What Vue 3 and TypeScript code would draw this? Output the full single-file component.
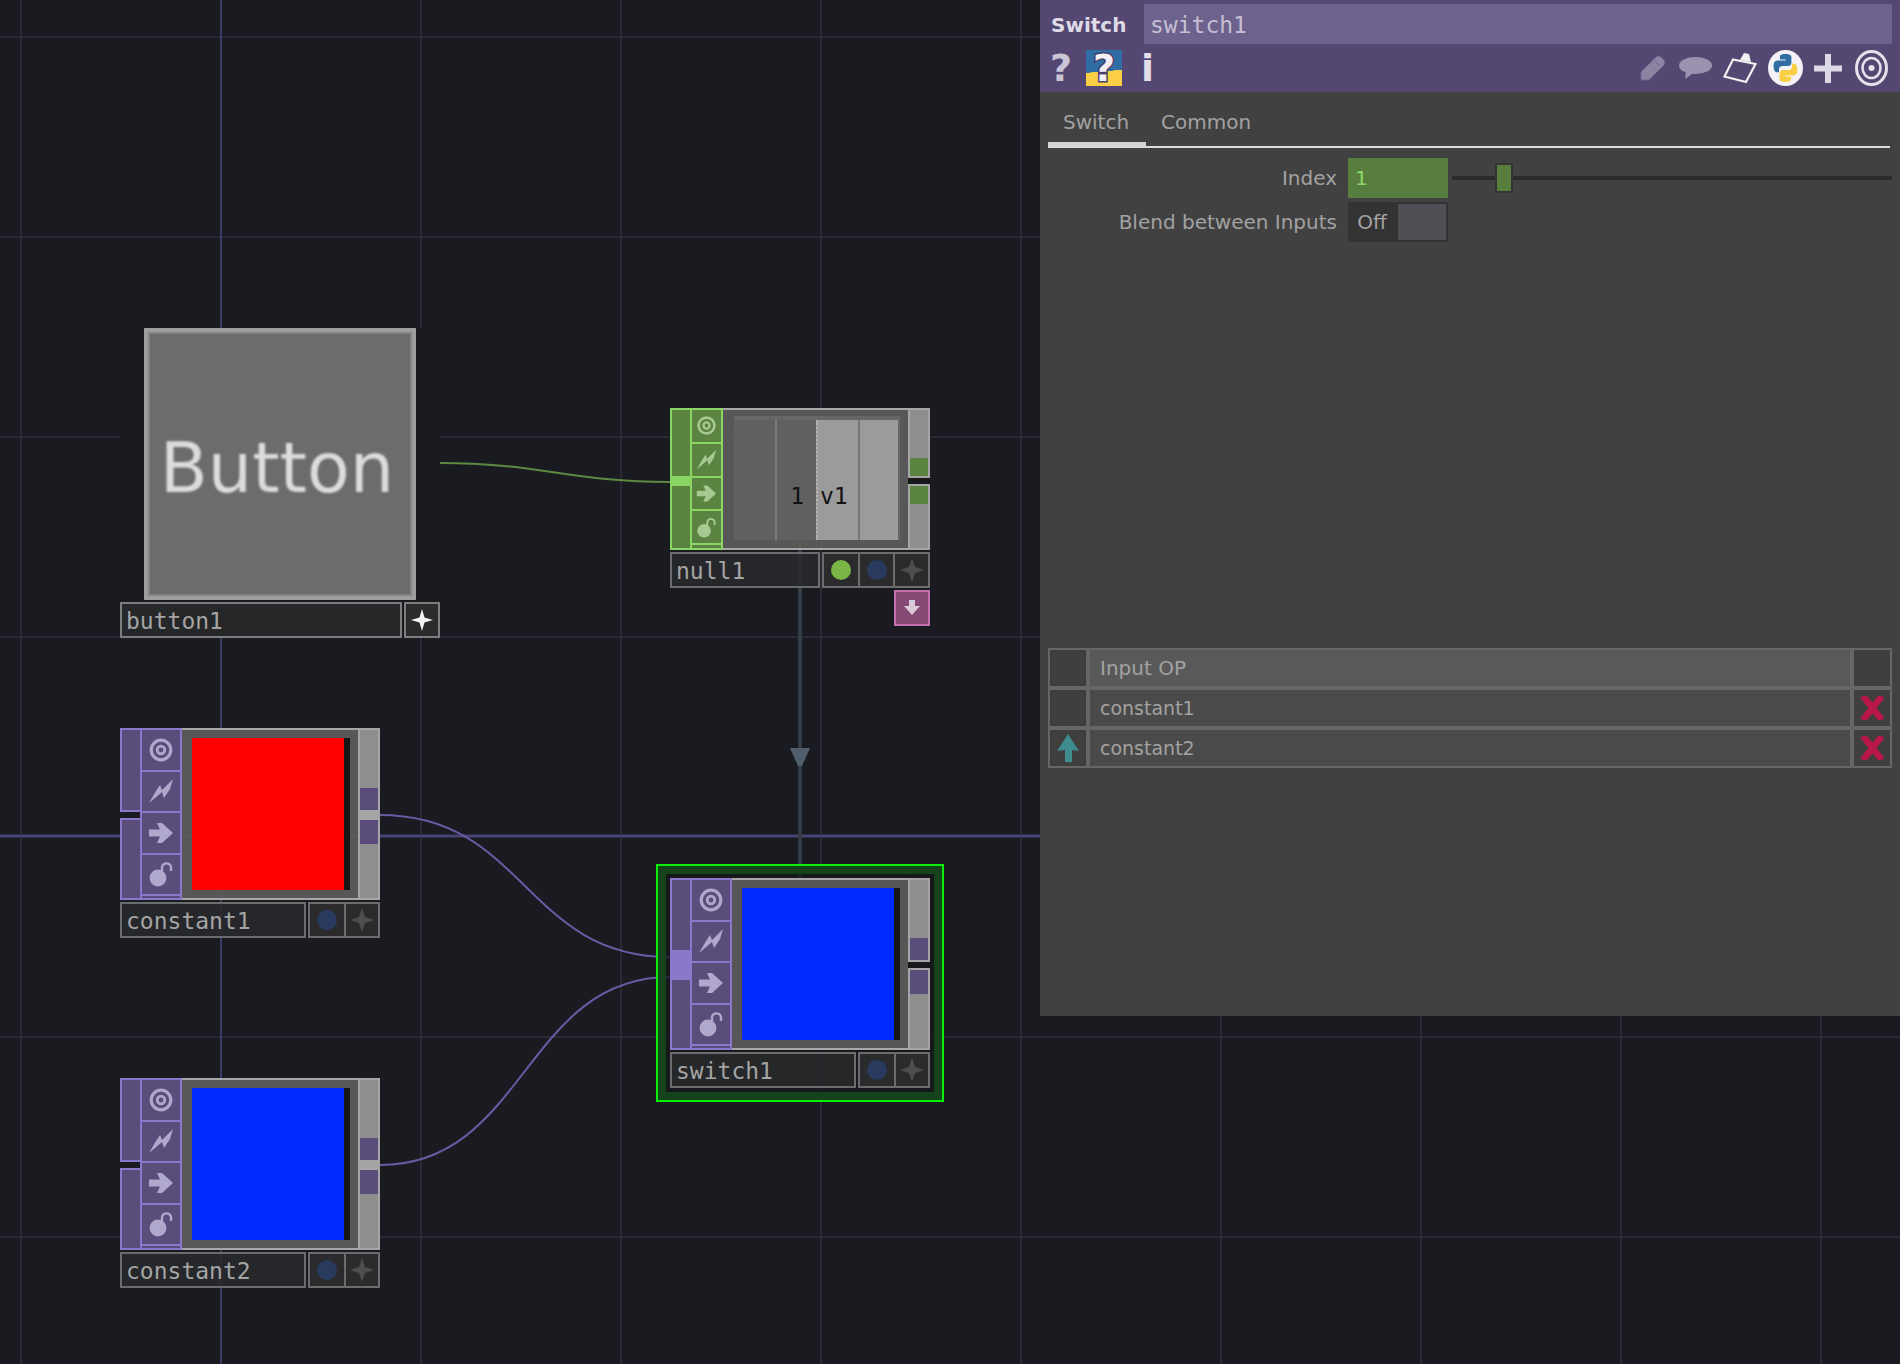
<script setup lang="ts">
interface OpNode {
  id: string
  tone: 'green' | 'purple'
  kind: 'const' | 'null' | 'switch'
  left: number
  top: number
  thumb: 'red' | 'blue' | 'chop'
  buttons: string[]
}

const nodes: OpNode[] = [
  { id: 'null1', tone: 'green', kind: 'null', left: 670, top: 408, thumb: 'chop', buttons: ['green', 'blue', 'star'] },
  { id: 'constant1', tone: 'purple', kind: 'const', left: 120, top: 728, thumb: 'red', buttons: ['blue', 'star'] },
  { id: 'constant2', tone: 'purple', kind: 'const', left: 120, top: 1078, thumb: 'blue', buttons: ['blue', 'star'] },
  { id: 'switch1', tone: 'purple', kind: 'switch', left: 670, top: 878, thumb: 'blue', buttons: ['blue', 'star'] },
]

const flagIcons = ['target', 'bolt', 'arrow', 'lock']
const vLines = [21, 421, 621, 821, 1021, 1221, 1421, 1621, 1821]
const hLines = [36, 236, 436, 636, 1036, 1236]
const tableRows = [
  { name: 'constant1', up: false },
  { name: 'constant2', up: true },
]
</script>

<template>
  <div class="canvas">
    <svg class="backdrop" width="1900" height="1364" viewBox="0 0 1900 1364">
      <line v-for="x in vLines" :key="'v' + x" :x1="x" y1="0" :x2="x" y2="1364" class="grid" />
      <line v-for="y in hLines" :key="'h' + y" x1="0" :y1="y + 1" x2="1900" :y2="y + 1" class="grid" />
      <line x1="221" y1="0" x2="221" y2="1364" class="axis" />
      <line x1="0" y1="836" x2="1900" y2="836" class="axis-edge" />
      <line x1="0" y1="836" x2="1900" y2="836" class="axis-core" />
      <line x1="800" y1="540" x2="800" y2="890" class="wire-v" />
      <polygon points="790,748 810,748 802,766 798,766" class="wire-arrow" />
      <path d="M440 463 C 540 463, 570 482, 670 482" class="wire-green" />
      <path d="M380 815 C 525 815, 525 957, 670 957" class="wire-purple" />
      <path d="M380 1165 C 525 1165, 525 977, 670 977" class="wire-purple" />
    </svg>

    <div class="selection"></div>

    <div class="button-node">
      <div class="button-face"><span class="button-text">Button</span></div>
      <div class="footer">
        <div class="label label-bright">button1</div>
        <div class="btns btns-bright">
          <div class="cell">
            <svg class="cell-icon" viewBox="0 0 24 24"><path d="M12 1 L14.5 9.5 L23 12 L14.5 14.5 L12 23 L9.5 14.5 L1 12 L9.5 9.5Z" fill="#f2f2f2" /></svg>
          </div>
        </div>
      </div>
    </div>

    <div
      v-for="n in nodes"
      :key="n.id"
      class="node"
      :class="['tone-' + n.tone, 'kind-' + n.kind]"
      :style="{ left: n.left + 'px', top: n.top + 'px' }"
    >
      <div class="body">
        <div class="inputs">
          <template v-if="n.kind === 'const'">
            <div class="strip strip-a"></div>
            <div class="strip strip-b"></div>
          </template>
          <div v-else class="strip strip-one">
            <div class="strip-fill"></div>
            <div class="strip-hl"></div>
          </div>
        </div>

        <div class="flags">
          <div v-for="f in flagIcons" :key="f" class="flag">
            <svg class="flag-icon" viewBox="0 0 26 26">
              <g v-if="f === 'target'" fill="none" class="ic-stroke">
                <circle cx="13" cy="13" r="9.8" stroke-width="3.2" />
                <circle cx="13" cy="13" r="3.8" stroke-width="2.8" />
              </g>
              <path v-else-if="f === 'bolt'" class="ic-fill" d="M1 25 L8 13 L12 7 L14 12 L20 6 L25 1 L22 11 L16 20 L14 14 L7 20Z" />
              <path v-else-if="f === 'arrow'" class="ic-fill" d="M1 9.5 H12 L9 3 H14 L25 13 L14 23 H9 L12 16.5 H1Z" />
              <g v-else>
                <circle cx="10" cy="17" r="8.4" class="ic-fill" />
                <path d="M14 10 V6 A4.6 4.6 0 0 1 23 6 V10" fill="none" class="ic-stroke" stroke-width="2.4" />
              </g>
            </svg>
          </div>
          <div class="flag-sliver"></div>
        </div>

        <div class="viewer">
          <div v-if="n.thumb === 'chop'" class="chop">
            <div class="chop-dark"><span>1</span></div>
            <div class="chop-bright"><span>v1</span></div>
          </div>
          <template v-else>
            <div class="thumb" :class="'thumb-' + n.thumb"></div>
            <div class="thumb-edge"></div>
          </template>
        </div>

        <div class="outs">
          <div class="seg seg-top"></div>
          <div class="conn conn-a"></div>
          <div class="sep"><div class="sep-gap"></div></div>
          <div class="conn conn-b"></div>
          <div class="seg seg-bot"></div>
        </div>
      </div>

      <div class="footer">
        <div class="label">{{ n.id }}</div>
        <div class="btns">
          <div v-for="b in n.buttons" :key="b" class="cell">
            <span v-if="b === 'green'" class="dot dot-green"></span>
            <span v-else-if="b === 'blue'" class="dot dot-blue"></span>
            <svg v-else class="cell-icon" viewBox="0 0 24 24"><path d="M12 0 L15 9 L24 12 L15 15 L12 24 L9 15 L0 12 L9 9Z" fill="#4d4e50" /></svg>
          </div>
        </div>
      </div>

      <div v-if="n.kind === 'null'" class="pink">
        <svg width="20" height="20" viewBox="0 0 20 20"><path d="M7 2 H13 V8 H18 L10 17 L2 8 H7Z" fill="#dccbd8" /></svg>
      </div>
    </div>

    <aside class="panel">
      <header class="head">
        <div class="head-top">
          <div class="op-type">Switch</div>
          <div class="op-name">switch1</div>
        </div>
        <div class="head-bar">
          <span class="glyph glyph-q">?</span>
          <span class="help-box"><span>?</span></span>
          <span class="glyph glyph-i">i</span>
          <div class="head-tools">
            <svg class="tool-pencil" width="26" height="26" viewBox="0 0 26 26"><path d="M1 17 L16 2 Q18 0 21 2 L24 5 Q26 8 24 10 L9 25 H1Z M15 6 L20 11" fill="#8d84a3" stroke="#6d628e" stroke-width="1" /></svg>
            <svg class="tool-chat" width="33" height="22" viewBox="0 0 33 22"><ellipse cx="16.5" cy="8.5" rx="16.5" ry="8.5" fill="#9a92ae" /><path d="M7 13 L6 22 L16 15Z" fill="#9a92ae" /></svg>
            <svg class="tool-clip" width="34" height="31" viewBox="0 0 34 31"><path d="M10 6.5 L32.5 11 L23 29 L1.5 23.5Z" fill="none" stroke="#f2f2f2" stroke-width="2.2" /><path d="M17 7 L21 0 L26 1 L28 9Z" fill="#f2f2f2" /></svg>
            <svg class="tool-py" width="35" height="36" viewBox="0 0 35 36">
              <ellipse cx="17.5" cy="18" rx="17.5" ry="18" fill="#f4f2f6" />
              <path d="M17.5 4 C11.5 4 11.9 6.7 11.9 6.7 V9.6 H17.7 V10.5 H9.6 S5.6 10 5.6 16.2 C5.6 22.4 9 22.2 9 22.2 H11 V19.3 S10.9 15.9 14.4 15.9 H20.2 S23.4 16 23.4 12.8 V7.3 S23.9 4 17.5 4Z" fill="#2f6ea5" />
              <path d="M17.5 32 C23.5 32 23.1 29.3 23.1 29.3 V26.4 H17.3 V25.5 H25.4 S29.4 26 29.4 19.8 C29.4 13.6 26 13.8 26 13.8 H24 V16.7 S24.1 20.1 20.6 20.1 H14.8 S11.6 20 11.6 23.2 V28.7 S11.1 32 17.5 32Z" fill="#fbcf45" />
            </svg>
            <svg class="tool-plus" width="28" height="29" viewBox="0 0 28 29"><path d="M11 0 H17 V11.5 H28 V17.5 H17 V29 H11 V17.5 H0 V11.5 H11Z" fill="#dcd9e4" /></svg>
            <svg class="tool-target" width="33" height="36" viewBox="0 0 33 36">
              <ellipse cx="16.5" cy="18" rx="15" ry="16.5" fill="none" stroke="#e4e1ea" stroke-width="3" />
              <ellipse cx="16.5" cy="18" rx="9" ry="10" fill="none" stroke="#e4e1ea" stroke-width="2.6" />
              <circle cx="16.5" cy="18" r="3" fill="#e4e1ea" />
            </svg>
          </div>
        </div>
      </header>

      <nav class="tabs">
        <div class="tab tab-on">Switch</div>
        <div class="tab">Common</div>
      </nav>

      <section class="params">
        <div class="param">
          <div class="param-label">Index</div>
          <div class="param-field">1</div>
          <div class="slider"><span class="slider-knob"></span></div>
        </div>
        <div class="param">
          <div class="param-label">Blend between Inputs</div>
          <div class="toggle"><span class="toggle-text">Off</span><span class="toggle-box"></span></div>
        </div>
      </section>

      <section class="table">
        <div class="row row-head">
          <div class="side"></div>
          <div class="main">Input OP</div>
          <div class="side"></div>
        </div>
        <div v-for="r in tableRows" :key="r.name" class="row">
          <div class="side">
            <svg v-if="r.up" width="24" height="28" viewBox="0 0 24 28"><path d="M12 0 L23 17 L16 16 V28 H9 V16 L1 17Z" fill="#3f8c8c" /></svg>
          </div>
          <div class="main">{{ r.name }}</div>
          <div class="side">
            <svg width="25" height="24" viewBox="0 0 25 24"><path d="M3 0 L22 24 M22 0 L3 24" fill="none" stroke="#b8174a" stroke-width="6.5" /></svg>
          </div>
        </div>
      </section>
    </aside>
  </div>
</template>

<style scoped>
.canvas {
  position: relative;
  width: 1900px;
  height: 1364px;
  overflow: hidden;
  background: #1a1b20;
  font-family: "DejaVu Sans", sans-serif;
}
.backdrop { position: absolute; left: 0; top: 0; }
.grid { stroke: #292a33; stroke-width: 2; }
.axis { stroke: #3b3b66; stroke-width: 2; }
.axis-edge { stroke: #2d2d44; stroke-width: 4; }
.axis-core { stroke: #46467a; stroke-width: 2; }
.wire-v { stroke: #343d47; stroke-width: 4; }
.wire-arrow { fill: #4f5e6d; }
.wire-green { fill: none; stroke: #5c8a42; stroke-width: 2; }
.wire-purple { fill: none; stroke: #6a5aa4; stroke-width: 2; }

.selection {
  position: absolute;
  left: 656px;
  top: 864px;
  width: 288px;
  height: 238px;
  box-sizing: border-box;
  border: 2px solid #08f008;
  outline: 8px solid rgba(20, 73, 27, 0.86);
  outline-offset: -10px;
  background: rgba(22, 23, 27, 0.78);
}

.button-node {
  position: absolute;
  left: 120px;
  top: 328px;
  width: 320px;
  background: #18191d;
}
.button-face {
  box-sizing: border-box;
  width: 272px;
  height: 272px;
  margin: 0 24px;
  border: 4px solid #9d9d9d;
  box-shadow: inset 0 0 0 2px #858585;
  background: #6c6c6c;
  display: flex;
  align-items: center;
  justify-content: center;
}
.button-text {
  font-size: 70px;
  line-height: 1;
  color: #dcdcdc;
  filter: blur(1.2px);
  transform: translate(-3px, 4px);
}

.node { position: absolute; width: 260px; }
.tone-purple { --f: #8a78cc; --i: #5a4d7c; --ic: #b0a8cc; }
.tone-green { --f: #8ad664; --i: #5b8443; --ic: #a5c990; }

.body { display: flex; height: 172px; }
.kind-null .body { height: 142px; }

.inputs { width: 20px; display: flex; flex-direction: column; justify-content: space-between; }
.strip {
  box-sizing: border-box;
  border: 2px solid var(--f);
  border-right: 0;
  background: var(--i);
}
.strip-a { height: 84px; }
.strip-b { height: 82px; }
.strip-one { height: 100%; display: flex; flex-direction: column; }
.strip-fill { height: 70px; }
.strip-hl { height: 30px; background: var(--f); }
.kind-null .strip-fill { height: 66px; }
.kind-null .strip-hl { height: 10px; }

.flags {
  box-sizing: border-box;
  width: 42px;
  display: flex;
  flex-direction: column;
  border: 2px solid var(--f);
  background: var(--i);
}
.kind-null .flags { width: 33px; }
.flag {
  flex: 1;
  display: flex;
  align-items: center;
  justify-content: center;
  border-bottom: 2px solid var(--f);
}
.flag-sliver { height: 2px; }
.kind-null .flag-sliver { height: 3px; }
.flag-icon { width: 26px; height: 26px; filter: blur(0.4px); }
.kind-null .flag-icon { width: 21px; height: 21px; }
.ic-fill { fill: var(--ic); }
.ic-stroke { stroke: var(--ic); }

.viewer {
  flex: 1;
  box-sizing: border-box;
  display: flex;
  padding: 8px 8px 8px 10px;
  border-top: 2px solid #a8a8a8;
  border-bottom: 2px solid #a8a8a8;
  background: rgba(92, 92, 92, 0.92);
}
.thumb { width: 152px; height: 152px; }
.thumb-red { background: #ff0000; }
.thumb-blue { background: #002aff; }
.thumb-edge { width: 6px; height: 152px; background: #161616; }

.kind-null .viewer { padding: 6px 8px 8px 11px; }
.chop { flex: 1; display: flex; background: #676767; padding-top: 4px; padding-right: 2px; }
.chop-dark, .chop-bright {
  position: relative;
  display: flex;
  align-items: flex-end;
  padding-bottom: 30px;
  font-family: "DejaVu Sans Mono", monospace;
  font-size: 23px;
  line-height: 27px;
  color: #111;
}
.chop-dark {
  flex: 1;
  justify-content: flex-end;
  padding-right: 12px;
  background: #606060;
}
.chop-dark::after {
  content: "";
  position: absolute;
  left: 41px;
  top: 0;
  bottom: 0;
  width: 2px;
  background: #7b7b7b;
}
.chop-bright {
  box-sizing: border-box;
  width: 82px;
  padding-left: 2px;
  background: #9b9b9b;
  border-left: 2px dotted #b5b5b5;
}
.chop-bright::after {
  content: "";
  position: absolute;
  left: 40px;
  top: 0;
  bottom: 0;
  width: 2px;
  background: #777;
}

.outs {
  box-sizing: border-box;
  width: 22px;
  display: flex;
  flex-direction: column;
  border: 2px solid #a5a5a5;
  background: #8e8e8e;
}
.seg-top { height: 58px; }
.kind-null .seg-top { height: 48px; }
.seg-bot { flex: 1; }
.conn { background: var(--i); }
.conn-a { height: 22px; }
.conn-b { height: 24px; }
.kind-null .conn-a, .kind-null .conn-b { height: 18px; }
.sep { height: 10px; background: #a5a5a5; box-sizing: border-box; padding: 2px 0; margin: 0 -2px; }
.kind-const .sep-gap { display: none; }
.sep-gap { height: 6px; background: #17181c; }

.footer { display: flex; gap: 2px; height: 36px; margin-top: 2px; }
.label {
  flex: 1;
  box-sizing: border-box;
  border: 2px solid #6b6c6e;
  background: rgba(40, 41, 43, 0.88);
  color: #a4a4a4;
  font-family: "DejaVu Sans Mono", monospace;
  font-size: 23px;
  line-height: 34px;
  padding-left: 4px;
}
.label-bright { border-color: #7d7e80; }
.btns {
  display: flex;
  box-sizing: border-box;
  border: 2px solid #6b6c6e;
  background: rgba(45, 46, 47, 0.88);
}
.btns-bright { border-color: #7d7e80; }
.cell {
  width: 34px;
  box-sizing: border-box;
  display: flex;
  align-items: center;
  justify-content: center;
}
.cell + .cell { border-left: 2px solid #6b6c6e; }
.kind-null .cell + .cell { width: 35px; }
.btns-bright .cell { width: 32px; }
.cell-icon { width: 24px; height: 24px; }
.dot { width: 20px; height: 20px; border-radius: 50%; }
.dot-green { background: #7ab648; }
.dot-blue { background: #283b5f; }

.pink {
  position: absolute;
  right: 0;
  top: 182px;
  box-sizing: border-box;
  width: 36px;
  height: 36px;
  border: 2px solid #c46fae;
  background: #854a75;
  display: flex;
  align-items: center;
  justify-content: center;
}

.panel {
  position: absolute;
  right: 0;
  top: 0;
  width: 860px;
  height: 1016px;
  display: flex;
  flex-direction: column;
  background: #414141;
  color: #a2a2a2;
  font-size: 20px;
}
.head { height: 92px; background: #544872; flex: none; }
.head-top { height: 46px; box-sizing: border-box; padding: 4px 8px 2px 11px; display: flex; align-items: stretch; }
.op-type { width: 93px; font-weight: 700; color: #dedbe6; line-height: 42px; }
.op-name {
  flex: 1;
  background: #6d628e;
  color: #c4bfd3;
  font-family: "DejaVu Sans Mono", monospace;
  font-size: 23px;
  line-height: 42px;
  padding-left: 6px;
}
.head-bar { height: 46px; box-sizing: border-box; padding: 0 12px 2px 7px; display: flex; align-items: center; }
.glyph { font-weight: 700; font-size: 38px; line-height: 44px; color: #c9c5d6; }
.glyph-q { width: 28px; text-align: center; }
.help-box {
  margin-left: 11px;
  width: 36px;
  height: 36px;
  background: linear-gradient(175deg, #2f6ea5 58%, #fbcf45 59%);
  display: flex;
  align-items: center;
  justify-content: center;
  font-weight: 700;
  font-size: 38px;
  line-height: 36px;
  color: #f2f0f5;
  -webkit-text-stroke: 3px #4a3f6a;
  paint-order: stroke fill;
}
.glyph-i { margin-left: 19px; color: #e2dfe9; }
.head-tools { margin-left: auto; display: flex; align-items: center; gap: 11px; }
.tool-chat { margin-left: 2px; }
.tool-target { margin-left: 2px; }

.tabs {
  height: 56px;
  flex: none;
  box-sizing: border-box;
  margin: 0 10px 0 8px;
  display: flex;
  border-bottom: 2px solid #dcdcdc;
}
.tab { padding: 16px 15px 0; line-height: 28px; }
.tab-on { width: 98px; box-sizing: border-box; border-bottom: 5px solid #d5d5d5; margin-bottom: -1px; }

.params { padding-top: 10px; display: flex; flex-direction: column; gap: 4px; flex: none; }
.param { display: flex; height: 40px; align-items: stretch; }
.param-label { width: 297px; text-align: right; line-height: 40px; margin-right: 11px; }
.param-field {
  width: 100px;
  background: #587e3f;
  color: #8fd66a;
  line-height: 40px;
  padding-left: 7px;
  box-sizing: border-box;
}
.slider { position: relative; flex: 1; margin: 18px 8px 18px 4px; background: #2b2b2b; }
.slider-knob {
  position: absolute;
  left: 43px;
  top: -13px;
  box-sizing: border-box;
  width: 18px;
  height: 30px;
  border: 2px solid #333;
  background: #587e3f;
}
.toggle { width: 100px; display: flex; background: #333; padding: 2px; box-sizing: border-box; }
.toggle-text { width: 44px; text-align: center; line-height: 36px; margin-right: 4px; }
.toggle-box { flex: 1; background: #4f4f55; }

.table { margin: 406px 8px 0; display: flex; flex-direction: column; }
.row { display: grid; grid-template-columns: 40px 1fr 40px; height: 40px; }
.side, .main { box-sizing: border-box; border: 2px solid #666; display: flex; align-items: center; justify-content: center; background: #3f3f3f; }
.main { justify-content: flex-start; background: #4a4a4a; padding-left: 10px; font-size: 19px; }
.row-head .main { background: #595959; font-size: 20px; }
</style>

<style>
html, body { background: #1a1b20; }
</style>
